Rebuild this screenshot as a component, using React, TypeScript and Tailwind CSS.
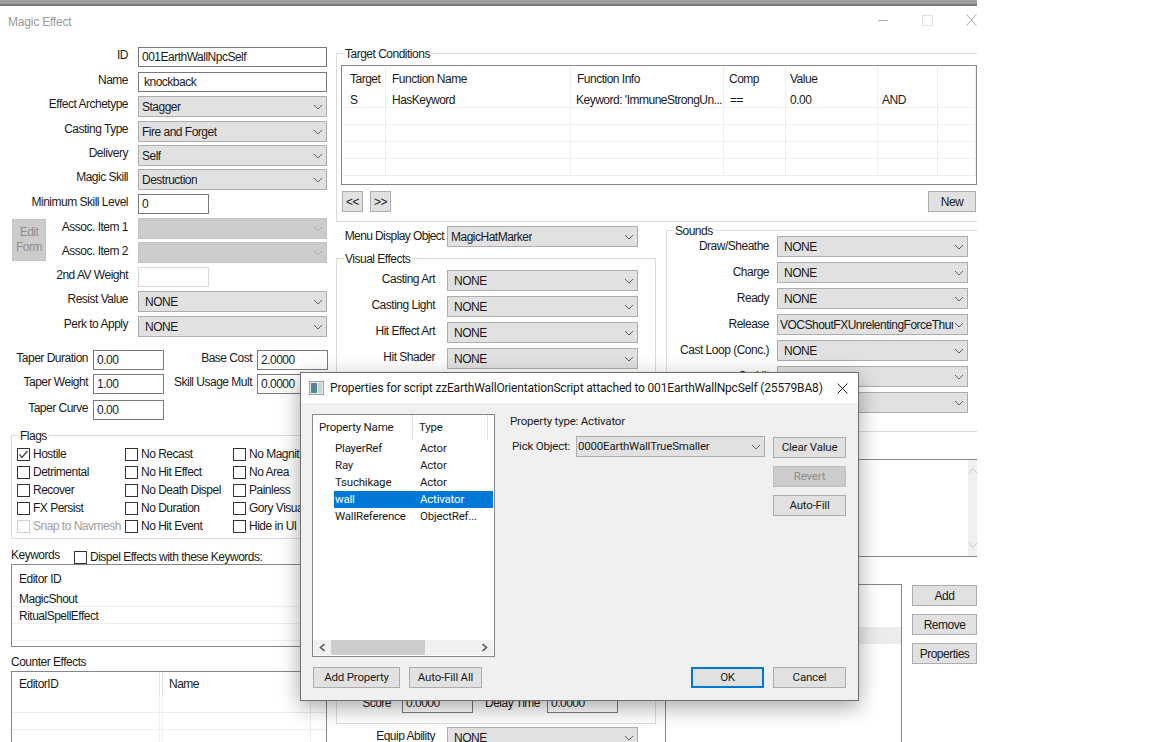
import React from 'react';

const Chevron = ({ color = '#606060' }: { color?: string }) => (
  <svg width="10" height="6" viewBox="0 0 10 6" className="shrink-0">
    <polyline points="1,1 5,5 9,1" fill="none" stroke={color} strokeWidth="1" />
  </svg>
);

const Select = ({ value = '', w = 'w-[189px]', h = 'h-[21px]', inset = 'pl-[6px]', disabled = false }: { value?: string; w?: string; h?: string; inset?: string; disabled?: boolean }) => (
  <div className={`${w} ${h} ${inset} shrink-0 flex items-center justify-between pr-[3px] border ${disabled ? 'bg-[#cccccc] border-[#c4c4c4]' : 'bg-[#e1e1e1] border-[#adadad]'}`}>
    <span className="overflow-hidden whitespace-nowrap mr-px">{value}</span>
    <Chevron color={disabled ? '#a8a8a8' : '#606060'} />
  </div>
);

const Input = ({ value = '', w = 'w-[71px]', h = 'h-[20px]', inset = 'pl-[3px]', disabled = false }: { value?: string; w?: string; h?: string; inset?: string; disabled?: boolean }) => (
  <div className={`${w} ${h} ${inset} shrink-0 flex items-center bg-white border ${disabled ? 'border-[#d9d9d9]' : 'border-[#7a7a7a]'}`}>{value}</div>
);

const btnTones = {
  normal: 'bg-[#e1e1e1] border border-[#adadad]',
  disabled: 'bg-[#cccccc] border border-[#bfbfbf] text-[#8f8f8f]',
  focus: 'bg-[#e1e1e1] border-2 border-[#0078d7]',
};

const Btn = ({ label, className = '', tone = 'normal' }: { label: string; className?: string; tone?: keyof typeof btnTones }) => (
  <div className={`h-[21px] flex items-center justify-center ${btnTones[tone]} ${className}`}>{label}</div>
);

const Group = ({ title, className = '', children }: { title: string; className?: string; children?: React.ReactNode }) => (
  <div className={`relative border border-[#dcdcdc] ${className}`}>
    <span className="absolute -top-[8px] left-[7px] bg-white px-px leading-[16px]">{title}</span>
    {children}
  </div>
);

const FormRow = ({ label, pitch, labelW = 'w-[138px] pr-[10px]', children }: { label: string; pitch: string; labelW?: string; children: React.ReactNode }) => (
  <div className={`flex items-start ${pitch}`}>
    <div className={`${labelW} shrink-0 text-right leading-[16px] whitespace-nowrap`}>{label}</div>
    {children}
  </div>
);

const Check = ({ label, checked = false, disabled = false, className = '' }: { label: string; checked?: boolean; disabled?: boolean; className?: string }) => (
  <div className={`h-[18px] flex items-center whitespace-nowrap ${disabled ? 'text-[#a0a0a0]' : ''} ${className}`}>
    <div className={`w-[13px] h-[13px] mr-[3px] shrink-0 bg-white border flex items-center justify-center ${disabled ? 'border-[#cfcfcf]' : 'border-[#333333]'}`}>
      {checked && (
        <svg width="11" height="11" viewBox="0 0 11 11">
          <polyline points="1.5,5.5 4,8.5 9.5,2" fill="none" stroke="#444444" strokeWidth="1.3" />
        </svg>
      )}
    </div>
    {label}
  </div>
);

const flags = [
  ['Hostile', 'No Recast', 'No Magnitude'],
  ['Detrimental', 'No Hit Effect', 'No Area'],
  ['Recover', 'No Death Dispel', 'Painless'],
  ['FX Persist', 'No Duration', 'Gory Visuals'],
  ['Snap to Navmesh', 'No Hit Event', 'Hide in UI'],
];

const conditionRows = [
  ['S', 'HasKeyword', "Keyword: 'ImmuneStrongUn...", '==', '0.00', 'AND', ''],
  ['', '', '', '', '', '', ''],
  ['', '', '', '', '', '', ''],
  ['', '', '', '', '', '', ''],
  ['', '', '', '', '', '', ''],
];

const condCols = 'grid grid-cols-[44px_185px_153px_62px_92px_60px_38px]';

const TargetConditions = () => (
  <Group title="Target Conditions" className="h-[169px] border-r-0 pl-[4px] pt-[11px]">
    <div className="h-[120px] border border-[#82878f] overflow-hidden">
      <div className={`${condCols} h-[25px]`}>
        {['Target', 'Function Name', 'Function Info', 'Comp', 'Value', '', ''].map((c, i) => (
          <div key={i} className={`flex items-center pt-px border-r border-[#eeeeee] ${i === 0 ? 'pl-[8px]' : i > 3 ? 'pl-[4px]' : i === 3 ? 'pl-[5px]' : 'pl-[6px]'}`}>{c}</div>
        ))}
      </div>
      {conditionRows.map((row, r) => (
        <div key={r} className={`${condCols} h-[17px] border-b border-[#eeeeee]`}>
          {row.map((c, i) => (
            <div key={i} className={`flex items-center pt-px whitespace-nowrap overflow-hidden border-r border-[#eeeeee] ${i === 0 ? 'pl-[8px]' : i === 2 ? 'pl-[5px]' : i > 3 ? 'pl-[4px]' : 'pl-[6px]'}`}>{c}</div>
          ))}
        </div>
      ))}
    </div>
    <div className="flex items-center mt-[6px] pr-[1px]">
      <Btn label="<<" className="w-[21px] ml-px" />
      <Btn label=">>" className="w-[21px] ml-[7px]" />
      <Btn label="New" className="w-[48px] ml-auto" />
    </div>
  </Group>
);

const taperLabel = 'w-[93px] pr-[5px]';

const LeftColumn = () => (
  <div className="w-[336px] shrink-0 pt-[41px]">
    <div className="w-[327px]">
      <FormRow label="ID" pitch="h-[25px]"><Input value="001EarthWallNpcSelf" w="w-[189px]" /></FormRow>
      <FormRow label="Name" pitch="h-[24px]"><Input value="knockback" w="w-[189px]" inset="pl-[5px]" /></FormRow>
      <FormRow label="Effect Archetype" pitch="h-[25px]"><Select value="Stagger" inset="pl-[3px]" /></FormRow>
      <FormRow label="Casting Type" pitch="h-[24px]"><Select value="Fire and Forget" inset="pl-[3px]" /></FormRow>
      <FormRow label="Delivery" pitch="h-[24px]"><Select value="Self" inset="pl-[3px]" /></FormRow>
      <FormRow label="Magic Skill" pitch="h-[25px]"><Select value="Destruction" inset="pl-[3px]" /></FormRow>
      <FormRow label="Minimum Skill Level" pitch="h-[24px]"><Input value="0" /></FormRow>
      <div className="flex h-[49px]">
        <div className="w-[34px] h-[42px] ml-[12px] mt-px shrink-0 bg-[#cccccc] border border-[#c4c4c4] text-[#8f8f8f] text-center leading-[15px] flex items-center justify-center">Edit<br />Form</div>
        <div className="flex-1">
          <FormRow label="Assoc. Item 1" pitch="h-[24px]" labelW="w-[92px] pr-[10px] pt-px"><Select disabled /></FormRow>
          <FormRow label="Assoc. Item 2" pitch="h-[25px]" labelW="w-[92px] pr-[10px] pt-px"><Select disabled /></FormRow>
        </div>
      </div>
      <FormRow label="2nd AV Weight" pitch="h-[24px]"><Input disabled /></FormRow>
      <FormRow label="Resist Value" pitch="h-[25px]"><Select value="NONE" /></FormRow>
      <FormRow label="Perk to Apply" pitch="h-[34px]"><Select value="NONE" /></FormRow>
    </div>

    <div className="flex w-[336px]">
      <div className="w-[164px] shrink-0">
        <FormRow label="Taper Duration" pitch="h-[24px]" labelW={taperLabel}><Input value="0.00" /></FormRow>
        <FormRow label="Taper Weight" pitch="h-[26px]" labelW={taperLabel}><Input value="1.00" /></FormRow>
        <FormRow label="Taper Curve" pitch="h-[35px]" labelW={taperLabel}><Input value="0.00" /></FormRow>
      </div>
      <div className="w-[164px] shrink-0">
        <FormRow label="Base Cost" pitch="h-[24px]" labelW={taperLabel}><Input value="2.0000" /></FormRow>
        <FormRow label="Skill Usage Mult" pitch="h-[26px]" labelW={taperLabel}><Input value="0.0000" /></FormRow>
      </div>
    </div>

    <Group title="Flags" className="ml-[11px] w-[316px] h-[104px] pt-[9px] pl-[5px]">
      {flags.map((row) => (
        <div key={row[0]} className="grid grid-cols-[108px_108px_90px] overflow-hidden">
          <Check label={row[0]} checked={row[0] === 'Hostile'} disabled={row[0].startsWith('Snap')} />
          <Check label={row[1]} />
          <Check label={row[2]} />
        </div>
      ))}
    </Group>

    <div className="ml-[11px] w-[316px]">
      <div className="flex h-[25px] items-end">
        <span className="w-[63px] leading-[18px]">Keywords</span>
        <Check label="Dispel Effects with these Keywords:" className="-mb-[2px] relative" />
      </div>
      <div className="h-[83px] border border-[#82878f] overflow-hidden">
        <div className="h-[25px] pl-[7px] pt-[2px] flex items-center">Editor ID</div>
        {['MagicShout', 'RitualSpellEffect', ''].map((k, i) => (
          <div key={i} className="h-[17px] pl-[7px] pt-px flex items-center border-b border-[#eeeeee]">{k}</div>
        ))}
      </div>
      <div className="h-[24px] flex items-end leading-[18px]">Counter Effects</div>
      <div className="h-[90px] border border-[#82878f]">
        <div className="grid grid-cols-[147px_4px_147px_1fr] h-[24px]">
          <div className="pl-[7px] flex items-center">EditorID</div>
          <div className="border-x border-[#e4e4e4]" />
          <div className="pl-[6px] flex items-center">Name</div>
          <div className="border-l border-[#eeeeee]" />
        </div>
        {[0, 1, 2].map((i) => (
          <div key={i} className="grid grid-cols-[147px_4px_147px_1fr] h-[17px] border-b border-[#eeeeee]">
            <div />
            <div className="border-x border-[#eeeeee]" />
            <div />
            <div className="border-l border-[#eeeeee]" />
          </div>
        ))}
      </div>
    </div>
  </div>
);

const VisualEffects = () => (
  <>
    <div className="flex items-start h-[32px] mt-[4px]">
      <div className="w-[111px] text-right pr-[3px] leading-[20px] whitespace-nowrap tracking-[-0.6px]">Menu Display Object</div>
      <Select value="MagicHatMarker" w="w-[191px]" inset="pl-[3px]" />
    </div>
    <Group title="Visual Effects" className="w-[320px] h-[466px] pt-[11px]">
      {['Casting Art', 'Casting Light', 'Hit Effect Art', 'Hit Shader'].map((l) => (
        <div key={l} className="flex items-start h-[26px]">
          <div className="w-[98px] text-right leading-[18px]">{l}</div>
          <div className="ml-[12px]"><Select value="NONE" w="w-[191px]" /></div>
        </div>
      ))}
      <div className="h-[319px]" />
      <div className="flex items-start h-[20px]">
        <div className="w-[54px] text-right leading-[20px]">Score</div>
        <div className="ml-[11px]"><Input value="0.0000" /></div>
        <div className="w-[67px] text-right leading-[20px]">Delay Time</div>
        <div className="ml-[7px]"><Input value="0.0000" /></div>
      </div>
    </Group>
    <div className="flex items-start mt-[3px]">
      <div className="w-[99px] text-right leading-[18px]">Equip Ability</div>
      <div className="ml-[12px]"><Select value="NONE" w="w-[191px]" /></div>
    </div>
  </>
);

const Sounds = () => (
  <>
    <Group title="Sounds" className="h-[202px] border-r-0 pt-[5px] w-[312px] ml-px mt-[8px]">
      {[
        ['Draw/Sheathe', 'NONE'],
        ['Charge', 'NONE'],
        ['Ready', 'NONE'],
        ['Release', 'VOCShoutFXUnrelentingForceThur'],
        ['Cast Loop (Conc.)', 'NONE'],
        ['On Hit', 'NONE'],
        ['Fail', 'NONE'],
      ].map(([l, v]) => (
        <div key={l} className="flex items-start h-[26px]">
          <div className="w-[102px] text-right leading-[20px]">{l}</div>
          <div className="ml-[8px]">
            <Select value={v} w="w-[191px]" inset={v === 'NONE' ? 'pl-[6px]' : 'pl-[2px]'} />
          </div>
        </div>
      ))}
    </Group>
    <div className="h-[98px] mt-[27px] border border-[#82878f] border-r-0 flex justify-end">
      <div className="w-[9px] h-full bg-[#f0f0f0] flex flex-col items-center justify-between py-[8px]">
        <span className="rotate-180 flex"><Chevron color="#c8c8c8" /></span>
        <Chevron color="#c8c8c8" />
      </div>
    </div>
    <div className="flex mt-[27px]">
      <div className="w-[237px] h-[170px] shrink-0 border border-[#82878f] pt-[42px]">
        <div className="h-[17px] bg-[#ececec]" />
      </div>
      <div className="ml-[10px] w-[65px] shrink-0 flex flex-col gap-[8px] mt-px">
        <Btn label="Add" />
        <Btn label="Remove" />
        <Btn label="Properties" />
      </div>
    </div>
  </>
);

const props = [
  ['PlayerRef', 'Actor'],
  ['Ray', 'Actor'],
  ['Tsuchikage', 'Actor'],
  ['wall', 'Activator'],
  ['WallReference', 'ObjectRef...'],
];

const ScriptDialog = () => (
  <div className="absolute left-[300px] top-[372px] w-[559px] h-[329px] bg-[#f0f0f0] border border-[#6e6e6e] shadow-[0_6px_20px_rgba(0,0,0,0.35)] flex flex-col font-['Roboto',sans-serif] text-[11.5px] tracking-[-0.2px] text-[#1a1a1a]">
    <div className="h-[30px] shrink-0 bg-white flex items-center pl-[8px] pr-[10px]">
      <svg width="15" height="14" viewBox="0 0 15 14" className="mr-[6px] shrink-0">
        <rect x="0.5" y="0.5" width="14" height="13" fill="#e8ecef" stroke="#9aa3aa" />
        <rect x="2" y="2" width="6" height="10" fill="#4f8a8b" />
        <rect x="2" y="2" width="6" height="4" fill="#5d7f99" />
        <rect x="9" y="2" width="4" height="10" fill="#c9d3da" />
      </svg>
      <span className="text-[12px] tracking-[-0.18px] whitespace-nowrap">Properties for script zzEarthWallOrientationScript attached to 001EarthWallNpcSelf (25579BA8)</span>
      <svg width="11" height="11" viewBox="0 0 11 11" className="ml-auto shrink-0">
        <path d="M0.5 0.5 L10.5 10.5 M10.5 0.5 L0.5 10.5" stroke="#222222" strokeWidth="1" fill="none" />
      </svg>
    </div>
    <div className="flex-1 flex pt-[11px] pl-[11px] pr-[12px]">
      <div className="w-[183px] h-[243px] shrink-0 bg-white border border-[#82878f] flex flex-col">
        <div className="flex h-[25px] shrink-0">
          <div className="w-[100px] pl-[6px] pt-px flex items-center border-r border-[#e0e0e0]">Property Name</div>
          <div className="w-[75px] pl-[6px] pt-px flex items-center border-r border-[#e0e0e0]">Type</div>
        </div>
        <div className="flex-1">
          {props.map(([n, t]) => (
            <div key={n} className={`flex h-[17px] items-center pt-px ml-[21px] mr-px ${n === 'wall' ? 'bg-[#0078d7] text-white' : ''}`}>
              <div className="w-[85px] pl-px whitespace-nowrap">{n}</div>
              <div className="pl-px whitespace-nowrap">{t}</div>
            </div>
          ))}
        </div>
        <div className="h-[15px] mb-px mx-px bg-[#f0f0f0] flex items-center shrink-0">
          <div className="w-[17px] flex justify-center"><svg width="7" height="9" viewBox="0 0 7 9"><polyline points="5.5,1 1.5,4.5 5.5,8" fill="none" stroke="#555555" strokeWidth="1.6" /></svg></div>
          <div className="w-[94px] h-full bg-[#cdcdcd]" />
          <div className="ml-auto w-[17px] flex justify-center"><svg width="7" height="9" viewBox="0 0 7 9"><polyline points="1.5,1 5.5,4.5 1.5,8" fill="none" stroke="#555555" strokeWidth="1.6" /></svg></div>
        </div>
      </div>
      <div className="flex-1 pl-[15px]">
        <div className="h-[22px] flex items-center -mt-[3px]">Property type: Activator</div>
        <div className="flex mt-[3px]">
          <div className="w-[66px] pl-[2px] leading-[18px] pt-px">Pick Object:</div>
          <Select value="0000EarthWallTrueSmaller" inset="pl-[1px]" />
          <div className="ml-[8px] w-[73px] mt-px flex flex-col gap-[8px]">
            <Btn label="Clear Value" />
            <Btn label="Revert" tone="disabled" />
            <Btn label="Auto-Fill" />
          </div>
        </div>
      </div>
    </div>
    <div className="h-[33px] shrink-0 flex pl-[12px] pr-[12px]">
      <Btn label="Add Property" className="w-[87px]" />
      <Btn label="Auto-Fill All" className="w-[73px] ml-[9px]" />
      <Btn label="OK" tone="focus" className="w-[73px] ml-auto" />
      <Btn label="Cancel" className="w-[73px] ml-[9px]" />
    </div>
  </div>
);

export default function App() {
  return (
    <div className="relative w-[1152px] h-[742px] overflow-hidden bg-white font-['Liberation_Sans',sans-serif] text-[12px] tracking-[-0.5px] text-[#1a1a1a]">
      <div className="w-[977px] h-[742px] overflow-hidden relative">
        <div className="h-[6px] bg-[#a0a0a0] border-b-2 border-[#777777]" />
        <div className="absolute left-[8px] top-[13px] text-[#999999] tracking-[-0.2px]">Magic Effect</div>
        <div className="absolute right-0 top-[14px] flex items-center">
          <div className="w-[10px] h-px bg-[#b0b0b0] mr-[34px]" />
          <div className="w-[11px] h-[11px] border border-[#e2e2e2] mr-[33px]" />
          <svg width="11" height="12" viewBox="0 0 11 12"><path d="M0.5 0.5 L10.5 11.5 M10.5 0.5 L0.5 11.5" stroke="#a8a8a8" fill="none" /></svg>
        </div>
        <div className="flex">
          <LeftColumn />
          <div className="flex-1 min-w-0 pt-[47px]">
            <TargetConditions />
            <div className="flex">
              <div className="w-[329px] shrink-0"><VisualEffects /></div>
              <div className="flex-1 min-w-0"><Sounds /></div>
            </div>
          </div>
        </div>
      </div>
      <ScriptDialog />
    </div>
  );
}
